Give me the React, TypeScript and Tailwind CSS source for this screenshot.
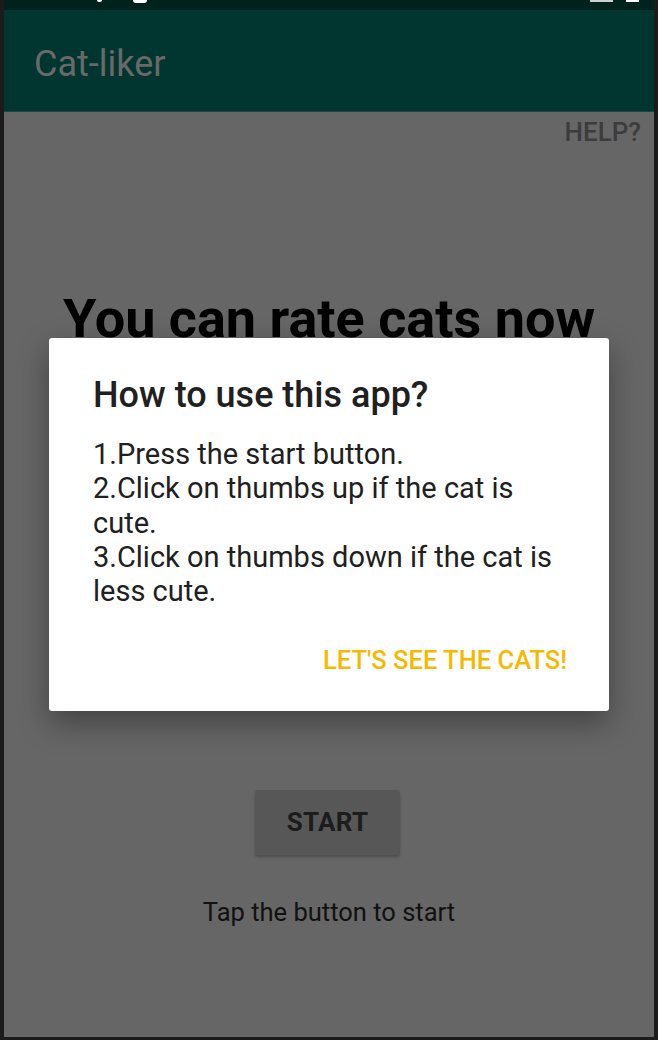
import React from "react";

export default function App() {
  return (
    <div
      className="relative w-[658px] h-[1040px] bg-[#1b1b1b] pl-[4px] pr-[4px] pb-[3px] overflow-hidden"
      style={{ fontFamily: "Roboto, 'Noto Sans', sans-serif" }}
    >
      <div className="flex flex-col h-full">
        {/* status bar */}
        <div className="h-[10px] bg-[#00221d] flex items-start">
          <div className="ml-[93px] w-[5px] h-[2px] bg-white rounded-b-sm" />
          <div className="ml-[31px] w-[14px] h-[3px] bg-white rounded-b-full" />
          <div className="ml-auto w-[23px] h-[2px] bg-[#cfcfcf]" />
          <div className="ml-[13px] mr-[15px] w-[13px] h-[2px] bg-white" />
        </div>
        {/* app bar */}
        <div className="h-[102px] bg-[#003530] border-b border-[#1e4540] flex items-center pl-[30px] pt-[6px]">
          <span className="text-[36px] leading-[42px] text-[#696969]">Cat-liker</span>
        </div>
        {/* body */}
        <div className="flex-1 bg-[#666666] flex flex-col items-center">
          <div className="self-end pr-[13px] mt-[5px]">
            <span className="text-[26px] leading-[30px] font-medium text-[#3c3c3c]">HELP?</span>
          </div>
          <div className="mt-[139px] text-[54px] leading-[63px] font-bold text-black">
            You can rate cats now
          </div>
          <div className="mt-[440px] mr-[3px] w-[145px] h-[65px] bg-[#575757] rounded-[3px] shadow-[0_2px_3px_rgba(0,0,0,0.25)] flex items-center justify-center">
            <span className="text-[26px] font-bold text-[#1c1c1c] tracking-[0.3px]">START</span>
          </div>
          <div className="mt-[42px] text-[25.5px] leading-[30px] text-[#111111]">
            Tap the button to start
          </div>
        </div>
      </div>

      {/* dialog */}
      <div className="absolute left-[49px] top-[338px] w-[560px] h-[373px] bg-white rounded-[3px] shadow-[0_12px_30px_rgba(0,0,0,0.35)] pt-[36px] pl-[44px] pr-[42px] flex flex-col">
        <div className="text-[36px] leading-[43px] font-medium text-[#202020]">How to use this app?</div>
        <div className="mt-[20px] text-[29px] leading-[34.3px] text-[#202020]">
          1.Press the start button.
          <br />
          2.Click on thumbs up if the cat is cute.
          <br />
          3.Click on thumbs down if the cat is less cute.
        </div>
        <div className="mt-[37px] flex justify-end">
          <span className="text-[25.5px] leading-[30px] font-medium text-[#f7b900]">LET'S SEE THE CATS!</span>
        </div>
      </div>
    </div>
  );
}
